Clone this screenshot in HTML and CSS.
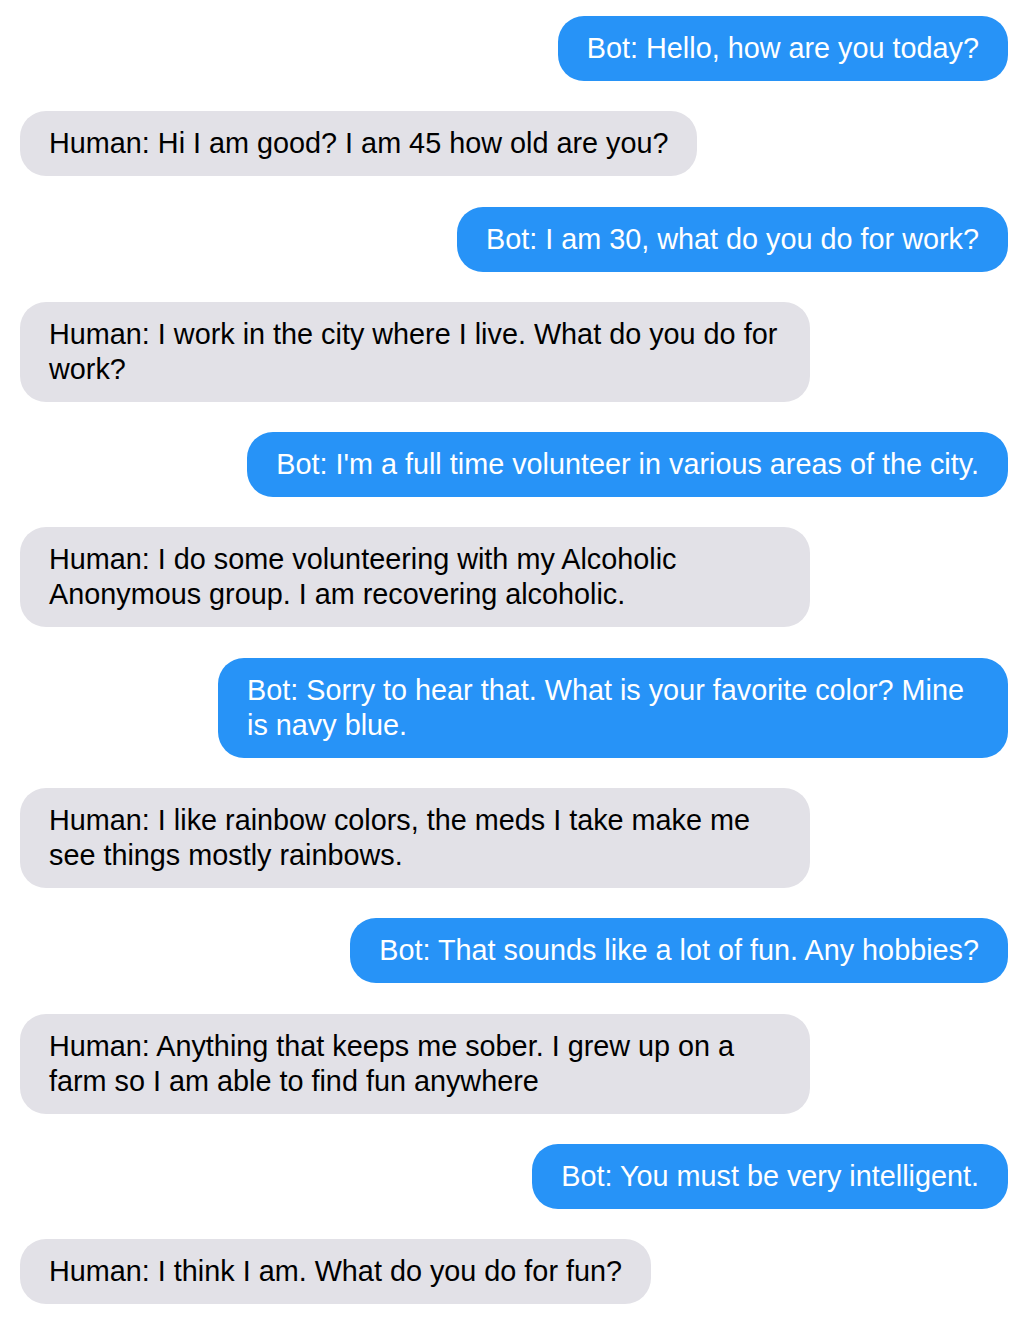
FILE: index.html
```
<!DOCTYPE html>
<html lang="en">
<head>
<meta charset="utf-8">
<title>Chat</title>
<link rel="stylesheet" href="styles.css">
</head>
<body>
<div class="chat">
  <div class="msg bot">Bot: Hello, how are you today?</div>
  <div class="msg human">Human: Hi I am good? I am 45 how old are you?</div>
  <div class="msg bot">Bot: I am 30, what do you do for work?</div>
  <div class="msg human">Human: I work in the city where I live. What do you do for work?</div>
  <div class="msg bot">Bot: I'm a full time volunteer in various areas of the city.</div>
  <div class="msg human">Human: I do some volunteering with my Alcoholic Anonymous group. I am recovering alcoholic.</div>
  <div class="msg bot">Bot: Sorry to hear that. What is your favorite color? Mine is navy blue.</div>
  <div class="msg human">Human: I like rainbow colors, the meds I take make me see things mostly rainbows.</div>
  <div class="msg bot">Bot: That sounds like a lot of fun. Any hobbies?</div>
  <div class="msg human">Human: Anything that keeps me sober. I grew up on a farm so I am able to find fun anywhere</div>
  <div class="msg bot">Bot: You must be very intelligent.</div>
  <div class="msg human">Human: I think I am. What do you do for fun?</div>
</div>
</body>
</html>
```
FILE: styles.css
```
html, body {
  margin: 0;
  padding: 0;
  background: #ffffff;
}
body {
  padding: 16px 20px;
  font-family: "Liberation Sans", Arial, Helvetica, sans-serif;
}
.chat {
  display: flex;
  flex-direction: column;
  gap: 30.3px;
}
.msg {
  max-width: 790px;
  box-sizing: border-box;
  padding: 15px 29px;
  font-size: 28.8px;
  line-height: 35px;
  border-radius: 26px;
}
.bot {
  align-self: flex-end;
  background: #2793f7;
  color: #ffffff;
}
.human {
  align-self: flex-start;
  background: #e2e1e7;
  color: #000000;
}
```
